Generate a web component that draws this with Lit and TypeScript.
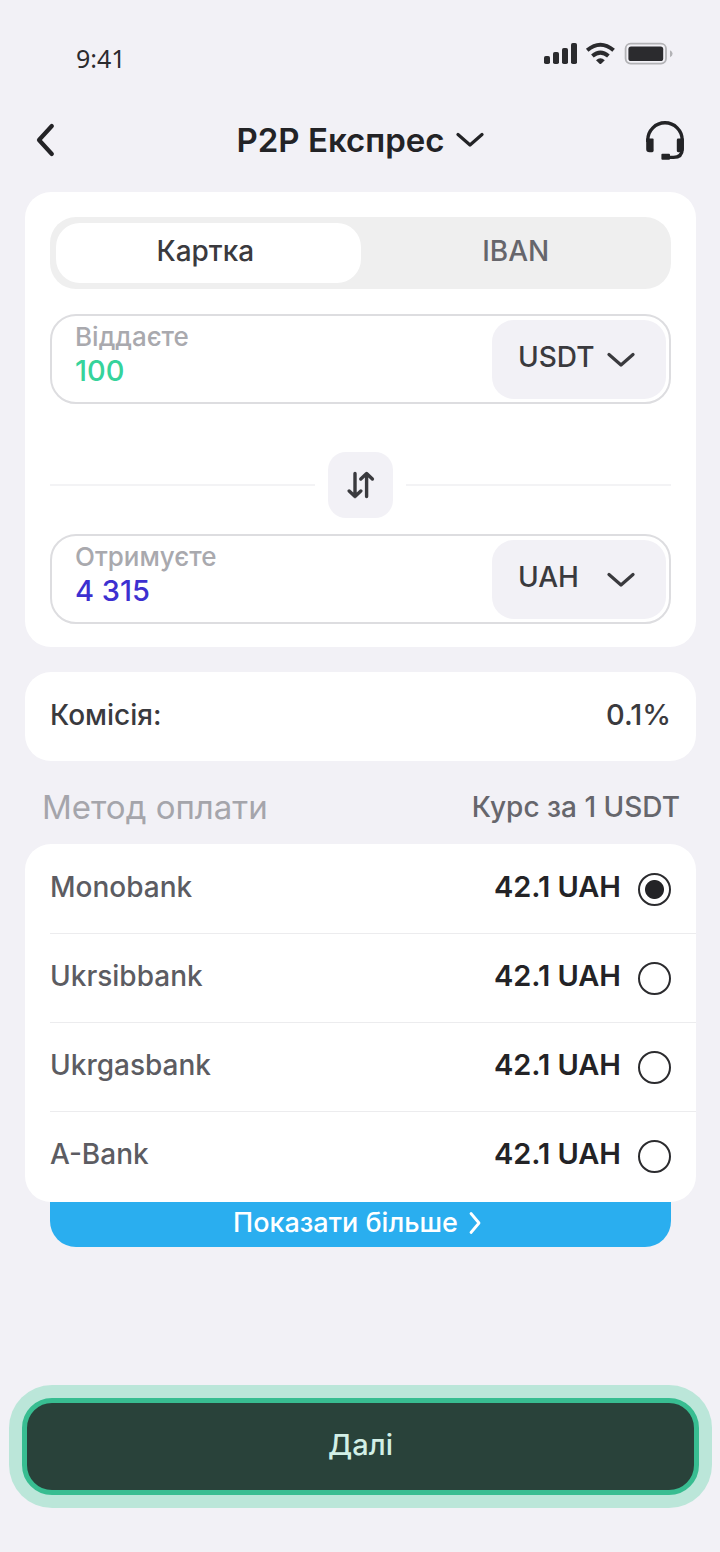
import { LitElement, html, css, svg } from "lit";
import { customElement, property, state } from "lit/decorators.js";

const chevronDown = html`<svg class="chevron" viewBox="0 0 28 16" width="28" height="16" aria-hidden="true">
  <path d="M2 2.5 L14 13 L26 2.5" fill="none" stroke="currentColor" stroke-width="3.2" stroke-linecap="round" stroke-linejoin="round"/>
</svg>`;

@customElement("status-bar")
class StatusBar extends LitElement {
  static styles = css`
    :host {
      display: flex;
      justify-content: space-between;
      align-items: center;
      height: 36px;
      padding: 40px 47px 0 76px;
      color: #2b2b2e;
    }
    .time {
      font: 400 25px/36px "Noto Sans", sans-serif;
    }
    .icons {
      display: block;
      margin-bottom: 8px;
    }
  `;
  render() {
    return html`
      <span class="time">9:41</span>
      <svg class="icons" viewBox="0 0 130 24" width="130" height="24" aria-hidden="true" fill="currentColor">
        ${[
          [1, 14, 8],
          [10, 10, 12],
          [19, 6, 16],
          [28, 1, 21],
        ].map(([x, y, h]) => svg`<rect x=${x} y=${y} width="6" height=${h} rx="1.8"/>`)}
        <g fill="none" stroke="currentColor" stroke-width="4">
          <path d="M44.2 8.2 Q57.4 -2.8 70.6 8.2"/>
          <path d="M49.4 14 Q57.4 7.2 65.4 14"/>
        </g>
        <path d="M53 18.2 Q57.4 14.4 61.8 18.2 L58.2 21.8 Q57.4 22.4 56.6 21.8 Z"/>
        <rect x="82.6" y="1.6" width="40.4" height="20" rx="5" fill="none" stroke="#b3b3b6" stroke-width="1.8"/>
        <rect x="85.4" y="4.6" width="34.8" height="14.4" rx="2.6"/>
        <path d="M127 8.2 Q129.6 9.4 129.6 11.8 Q129.6 14 127 15.2 Z" fill="#b3b3b6"/>
      </svg>
    `;
  }
}

@customElement("amount-field")
class AmountField extends LitElement {
  @property() label = "";
  @property() value = "";
  @property() tone = "give";
  @property({ attribute: false }) currencies: string[] = [];

  static styles = css`
    :host {
      display: block;
    }
    .field {
      display: flex;
      box-sizing: border-box;
      height: 90px;
      padding: 4px 3px 3px 23px;
      border: 2px solid #dddde0;
      border-radius: 26px;
      background: #fff;
    }
    .entry {
      flex: 1;
      min-width: 0;
      display: flex;
      flex-direction: column;
    }
    label {
      padding-top: 1px;
      font-size: 26px;
      font-weight: 500;
      line-height: 32px;
      color: #a9a9ae;
    }
    input {
      width: 100%;
      height: 36px;
      padding: 0;
      border: 0;
      outline: 0;
      background: none;
      font: 500 29px/36px Inter, sans-serif;
    }
    .give {
      color: #36d39b;
    }
    .get {
      color: #3c30d0;
    }
    .picker {
      display: grid;
      grid-template-columns: 1fr;
      align-items: center;
      width: 174px;
      color: #3a3a3e;
    }
    .picker > * {
      grid-area: 1 / 1;
    }
    select {
      appearance: none;
      width: 100%;
      height: 100%;
      padding: 0 0 6px 26px;
      border: 0;
      border-radius: 22px;
      background: #f2f1f6;
      color: inherit;
      font: 500 28px/36px Inter, sans-serif;
    }
    .chevron {
      justify-self: end;
      margin-right: 31px;
      pointer-events: none;
    }
  `;
  render() {
    return html`
      <div class="field">
        <div class="entry">
          <label for="amount">${this.label}</label>
          <input id="amount" class=${this.tone} type="text" inputmode="decimal" .value=${this.value} />
        </div>
        <div class="picker">
          <select aria-label="Валюта">
            ${this.currencies.map((c) => html`<option>${c}</option>`)}
          </select>
          ${chevronDown}
        </div>
      </div>
    `;
  }
}

@customElement("app-root")
class AppRoot extends LitElement {
  @state() tab = "Картка";
  @state() method = "Monobank";

  private tabs = ["Картка", "IBAN"];
  private methods = ["Monobank", "Ukrsibbank", "Ukrgasbank", "A-Bank"];

  static styles = css`
    :host {
      display: flex;
      flex-direction: column;
      box-sizing: border-box;
      min-height: 100vh;
      background: #f2f1f6;
      color: #3a3a3e;
      font: 500 28px/36px Inter, sans-serif;
    }
    button {
      border: 0;
      padding: 0;
      background: none;
      color: inherit;
      font: inherit;
      cursor: pointer;
    }
    svg {
      display: block;
    }
    .top {
      display: grid;
      grid-template-columns: 44px 1fr 44px;
      align-items: center;
      height: 48px;
      margin: 40px 34px 28px;
      color: #232326;
    }
    .title {
      display: flex;
      justify-content: center;
      align-items: center;
      gap: 11px;
      margin: 0;
    }
    .title select {
      appearance: none;
      padding: 0;
      border: 0;
      background: none;
      color: inherit;
      font: 600 33px/44px Inter, sans-serif;
    }
    .support {
      justify-self: end;
    }
    main {
      flex: 1;
      display: flex;
      flex-direction: column;
      padding: 0 24px 57px 25px;
    }
    .card {
      background: #fff;
      border-radius: 26px;
    }
    .exchange {
      padding: 25px 25px 23px;
    }
    .tabs {
      display: grid;
      grid-template-columns: 1fr 1fr;
      height: 72px;
      margin-bottom: 25px;
      border-radius: 26px;
      background: #efefef;
    }
    .tab {
      position: relative;
      isolation: isolate;
      padding-bottom: 4px;
      color: #66666c;
    }
    .tab.active {
      color: #3a3a3e;
    }
    .tab.active::before {
      content: "";
      position: absolute;
      z-index: -1;
      inset: 6px 0 6px 6px;
      border-radius: 24px;
      background: #fff;
    }
    .swap-row {
      display: flex;
      align-items: center;
      gap: 13px;
      margin: 48px 0 16px;
    }
    .rule {
      flex: 1;
      height: 2px;
      background: #f3f3f5;
    }
    .swap {
      display: grid;
      place-items: center;
      width: 65px;
      height: 66px;
      border-radius: 18px;
      background: #f2f1f6;
    }
    .fee {
      display: flex;
      justify-content: space-between;
      margin-top: 25px;
      padding: 25px 25px 28px;
    }
    .strong {
      font-size: 29px;
    }
    .list-head {
      display: flex;
      justify-content: space-between;
      align-items: center;
      height: 36px;
      margin: 28px 16px 19px 17px;
    }
    .list-head h2 {
      margin: 0;
      font-size: 33px;
      font-weight: 400;
      color: #a5a5ab;
    }
    .rate-head {
      color: #66666c;
    }
    .methods {
      margin: 0;
      padding: 1px 0 1px 25px;
      border: 0;
    }
    .method {
      display: flex;
      align-items: center;
      height: 88px;
      padding-right: 25px;
      border-bottom: 1px solid #ececee;
      cursor: pointer;
    }
    .method:last-child {
      border-bottom-color: transparent;
    }
    .bank {
      flex: 1;
      padding-bottom: 4px;
      color: #5c5c62;
    }
    .rate {
      padding-bottom: 4px;
      font-size: 29px;
      font-weight: 600;
      color: #232326;
    }
    .method input {
      appearance: none;
      box-sizing: border-box;
      width: 33px;
      height: 33px;
      margin: 0 0 0 17px;
      border: 2px solid #2b2b2e;
      border-radius: 50%;
    }
    .method input:checked {
      background: radial-gradient(circle, #232326 9px, transparent 10px);
    }
    .more {
      display: flex;
      justify-content: center;
      align-items: center;
      gap: 10px;
      height: 45px;
      margin: 0 25px;
      padding: 0 6px 3px 0;
      border-radius: 0 0 26px 26px;
      background: #2aaeef;
      color: #fff;
      font-size: 27px;
    }
    .next {
      height: 97px;
      margin: auto -3px 0;
      padding-bottom: 3px;
      border: 5px solid #38bd91;
      border-radius: 30px;
      background: #29423a;
      box-shadow: 0 0 0 13px #bbe6d9;
      color: #d2efe6;
      font-size: 29px;
    }
  `;

  render() {
    return html`
      <status-bar></status-bar>
      <header class="top">
        <button aria-label="Назад">
          <svg viewBox="0 0 24 36" width="24" height="36" aria-hidden="true">
            <path d="M17.8 4 L5 18 L17.8 32" fill="none" stroke="currentColor" stroke-width="4.2" stroke-linecap="round" stroke-linejoin="round"/>
          </svg>
        </button>
        <h1 class="title">
          <select aria-label="Режим обміну"><option>P2P Експрес</option></select>
          ${chevronDown}
        </h1>
        <button class="support" aria-label="Підтримка">
          <svg viewBox="0 0 42 42" width="42" height="42" aria-hidden="true" fill="currentColor">
            <path d="M3.8 23 V21 A17.2 17.2 0 0 1 38.2 21 V30 Q38.2 38.4 29.5 38.4 H25" fill="none" stroke="currentColor" stroke-width="3.4"/>
            <path d="M2.2 19.6 H8.6 Q9.6 19.6 9.6 20.6 V31.8 Q9.6 33.2 8.2 33.2 H5.5 Q2.2 33.2 2.2 30 Z"/>
            <path d="M39.8 19.6 H34.2 Q32.8 19.6 32.8 21 V31.8 Q32.8 33.2 34.2 33.2 H36.5 Q39.8 33.2 39.8 30 Z"/>
            <rect x="17.4" y="34.8" width="8.6" height="6" rx="1"/>
          </svg>
        </button>
      </header>
      <main>
        <section class="card exchange">
          <div class="tabs" role="tablist">
            ${this.tabs.map(
              (t) => html`<button
                role="tab"
                class="tab ${t === this.tab ? "active" : ""}"
                aria-selected=${t === this.tab}
                @click=${() => (this.tab = t)}
              >${t}</button>`
            )}
          </div>
          <amount-field label="Віддаєте" value="100" tone="give" .currencies=${["USDT", "BTC"]}></amount-field>
          <div class="swap-row">
            <span class="rule"></span>
            <button class="swap" aria-label="Поміняти місцями">
              <svg viewBox="0 0 28 28" width="28" height="28" aria-hidden="true">
                <g fill="none" stroke="currentColor" stroke-width="3.4" stroke-linecap="round" stroke-linejoin="round">
                  <path d="M8 2.4 V25.4 M2.2 20 L8 25.4 L13.8 20"/>
                  <path d="M19.6 25.6 V2.6 M13.8 8 L19.6 2.6 L25.4 8"/>
                </g>
              </svg>
            </button>
            <span class="rule"></span>
          </div>
          <amount-field label="Отримуєте" value="4 315" tone="get" .currencies=${["UAH", "EUR"]}></amount-field>
        </section>

        <section class="card fee">
          <span>Комісія:</span>
          <span class="strong">0.1%</span>
        </section>

        <div class="list-head">
          <h2>Метод оплати</h2>
          <span class="rate-head">Курс за 1 USDT</span>
        </div>
        <fieldset class="card methods" aria-label="Метод оплати">
          ${this.methods.map(
            (m) => html`<label class="method">
              <span class="bank">${m}</span>
              <span class="rate">42.1 UAH</span>
              <input
                type="radio"
                name="method"
                .checked=${m === this.method}
                @change=${() => (this.method = m)}
              />
            </label>`
          )}
        </fieldset>
        <button class="more">
          Показати більше
          <svg viewBox="0 0 14 24" width="14" height="24" aria-hidden="true">
            <path d="M3 2.5 L11 12 L3 21.5" fill="none" stroke="currentColor" stroke-width="2.8" stroke-linecap="round" stroke-linejoin="round"/>
          </svg>
        </button>
        <button class="next">Далі</button>
      </main>
    `;
  }
}
